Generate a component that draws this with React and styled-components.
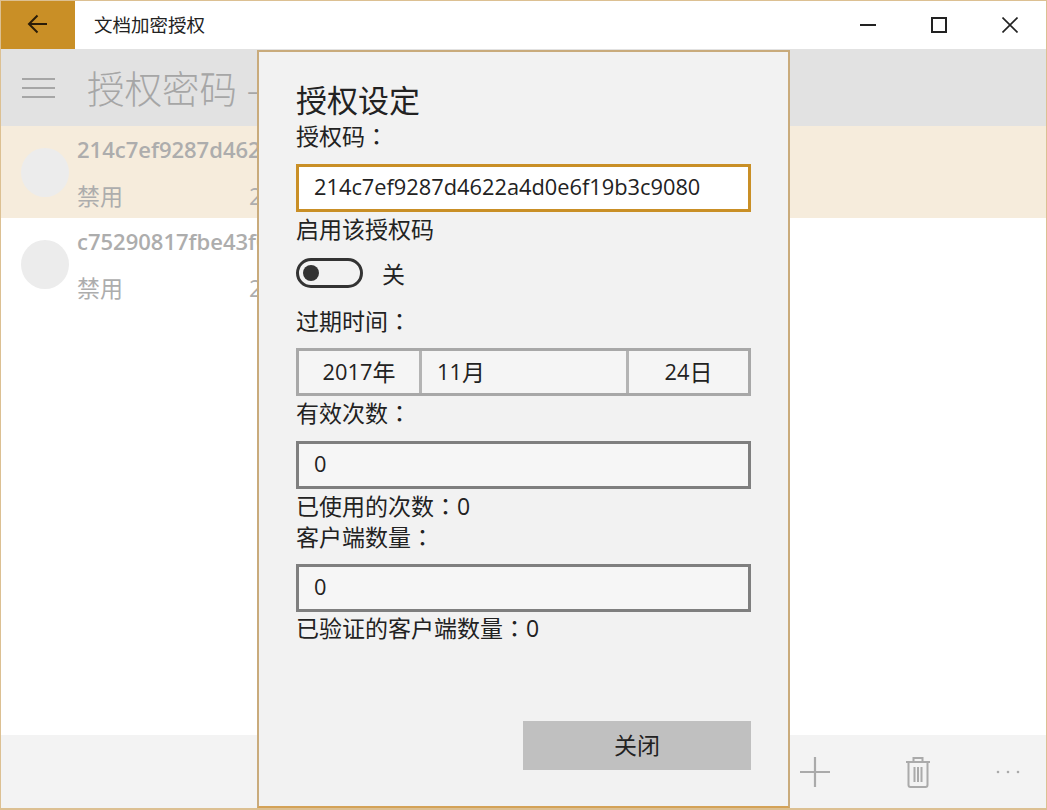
import React from "react";
import styled, { createGlobalStyle } from "styled-components";

const Global = createGlobalStyle`
  html, body { margin: 0; padding: 0; background: #fff; }
  * { box-sizing: border-box; }
`;

const FONT = `"Open Sans", "Noto Sans CJK SC", sans-serif`;

const Frame = styled.div`
  position: relative;
  width: 1047px;
  height: 810px;
  overflow: hidden;
  display: flex;
  flex-direction: column;
  border: 1px solid #dcc092;
  border-bottom-width: 2px;
  font-family: ${FONT};
  background: #fff;
`;

const TitleBar = styled.header`
  height: 48px;
  flex: none;
  display: flex;
  align-items: center;
  background: #fff;
`;

const BackButton = styled.div`
  width: 74px;
  height: 48px;
  background: #c98f26;
  display: flex;
  align-items: center;
  justify-content: center;
  padding-bottom: 2px;
`;

const AppTitle = styled.div`
  margin-left: 19px;
  font-size: 18.5px;
  line-height: 48px;
  color: #222;
`;

const WindowControls = styled.div`
  margin-left: auto;
  display: flex;
  align-items: center;
  padding-right: 28px;
  gap: 55px;
`;

const PageHeader = styled.div`
  height: 77px;
  flex: none;
  background: #e2e2e2;
  display: flex;
  align-items: center;
  padding-left: 21px;
`;

const PageTitle = styled.div`
  margin-left: 32px;
  font-size: 37.5px;
  line-height: 77px;
  padding-top: 1px;
  font-weight: 300;
  color: #a6a6a6;
  white-space: nowrap;
`;

const List = styled.div`
  flex: 1;
  min-height: 0;
  background: #fff;
`;

const Row = styled.div`
  height: 92px;
  display: flex;
  align-items: center;
  padding-left: 20px;
  background: ${(p) => (p.$selected ? "#f6ecdc" : "#fff")};
`;

const Avatar = styled.div`
  width: 48px;
  height: 49px;
  flex: none;
  border-radius: 50%;
  background: #ececec;
`;

const RowText = styled.div`
  margin-left: 8px;
  color: #adadad;
  margin-top: 0;
`;

const RowCode = styled.div`
  font-size: 22px;
  font-weight: 600;
  line-height: 40px;
  white-space: nowrap;
`;

const RowMeta = styled.div`
  display: flex;
  font-size: 23px;
  line-height: 40px;
  margin-top: 7px;
`;

const RowDate = styled.span`
  margin-left: 126px;
  white-space: nowrap;
`;

const CommandBar = styled.div`
  height: 73px;
  flex: none;
  background: #f3f3f3;
  display: flex;
  align-items: center;
  justify-content: flex-end;
  padding-right: 26px;
`;

const CommandSlot = styled.div`
  display: flex;
  align-items: center;
  margin-left: ${(p) => p.$gap}px;
`;

const Dialog = styled.section`
  position: absolute;
  top: 49px;
  left: 256px;
  bottom: 0;
  width: 533px;
  display: flex;
  flex-direction: column;
  padding: 31px 37px 36px 37px;
  background: #f2f2f2;
  border: 2px solid #c9ab7c;
  border-bottom-color: #d4a257;
  color: #222;
`;

const DialogTitle = styled.h2`
  margin: 0;
  font-size: 31px;
  font-weight: 400;
  line-height: 34px;
`;

const Label = styled.div`
  font-size: 23px;
  line-height: 30px;
  margin-top: ${(p) => p.$top ?? 0}px;
  white-space: nowrap;
`;

const Colon = styled.span`
  font-family: "Noto Sans CJK TC", sans-serif;
  line-height: 0;
`;

const Field = styled.div`
  height: 48px;
  margin-top: ${(p) => p.$top ?? 13}px;
  padding: 0 0 3px 15px;
  display: flex;
  align-items: center;
  font-size: 21.8px;
  border: 3px solid ${(p) => (p.$focused ? "#c98f26" : "#7f7f7f")};
  background: ${(p) => (p.$focused ? "#fff" : "#f6f6f6")};
  color: #222;
`;

const ToggleRow = styled.div`
  display: flex;
  align-items: center;
  height: 30px;
  margin-top: 14px;
  gap: 19px;
  font-size: 23px;
`;

const ToggleTrack = styled.div`
  width: 67px;
  height: 30px;
  border: 3px solid #333;
  border-radius: 15px;
  display: flex;
  align-items: center;
  padding-left: 4px;
`;

const ToggleKnob = styled.div`
  width: 16px;
  height: 16px;
  border-radius: 50%;
  background: #333;
`;

const DateBox = styled.div`
  height: 48px;
  margin-top: 12px;
  display: grid;
  grid-template-columns: 120px 1fr 122px;
  border: 3px solid #a8a8a8;
  background: #f5f5f5;
`;

const DatePart = styled.div`
  display: flex;
  align-items: center;
  justify-content: ${(p) => (p.$left ? "flex-start" : "center")};
  padding-left: ${(p) => (p.$left ? 15 : 0)}px;
  padding-bottom: 2px;
  font-size: 21.8px;
  border-left: ${(p) => (p.$divider ? "3px solid #b4b4b4" : "none")};
`;

const Unit = styled.span`
  font-size: 23px;
`;

const CloseButton = styled.div`
  margin-top: auto;
  align-self: flex-end;
  width: 228px;
  height: 49px;
  padding-bottom: 3px;
  display: flex;
  align-items: center;
  justify-content: center;
  background: #c0c0c0;
  font-size: 23px;
  color: #222;
`;

const Hamburger = () => (
  <svg width="33" height="22" viewBox="0 0 33 22" fill="none" stroke="#a6a6a6" strokeWidth="2">
    <path d="M0 2h33M0 11h33M0 20h33" />
  </svg>
);

const BackArrow = () => (
  <svg width="22" height="20" viewBox="0 0 22 20" fill="none" stroke="#2a1c08" strokeWidth="2">
    <path d="M20 10H2M10.5 1.5 2 10l8.5 8.5" />
  </svg>
);

const Minimize = () => (
  <svg width="16" height="16" viewBox="0 0 16 16" stroke="#222" strokeWidth="2" fill="none">
    <path d="M0 8h16" />
  </svg>
);

const Maximize = () => (
  <svg width="16" height="16" viewBox="0 0 16 16" stroke="#222" strokeWidth="2" fill="none">
    <rect x="1" y="1" width="14" height="14" />
  </svg>
);

const CloseX = () => (
  <svg width="16" height="16" viewBox="0 0 16 16" stroke="#222" strokeWidth="1.6" fill="none">
    <path d="M.5.5l15 15M15.5.5l-15 15" />
  </svg>
);

const PlusIcon = () => (
  <svg width="32" height="32" viewBox="0 0 32 32" stroke="#aaa" strokeWidth="2.2" fill="none">
    <path d="M16 1v30M1 16h30" />
  </svg>
);

const TrashIcon = () => (
  <svg width="26" height="32" viewBox="0 0 26 32" stroke="#aaa" strokeWidth="2" fill="none">
    <path d="M1 6h24M8.5 6V2h9v4M3.5 6v23a2 2 0 0 0 2 2h15a2 2 0 0 0 2-2V6M9.5 11v15M13 11v15M16.5 11v15" />
  </svg>
);

const DotsIcon = () => (
  <svg width="24" height="4" viewBox="0 0 24 4" fill="#aaa">
    <circle cx="2" cy="2" r="1.3" />
    <circle cx="12" cy="2" r="1.3" />
    <circle cx="22" cy="2" r="1.3" />
  </svg>
);

const rows = [
  { code: "214c7ef9287d4622a4d0e6f19b3c9080", selected: true },
  { code: "c75290817fbe43f0", selected: false },
];

export default function App() {
  return (
    <>
      <Global />
      <Frame>
        <TitleBar>
          <BackButton><BackArrow /></BackButton>
          <AppTitle>文档加密授权</AppTitle>
          <WindowControls>
            <Minimize />
            <Maximize />
            <CloseX />
          </WindowControls>
        </TitleBar>
        <PageHeader>
          <Hamburger />
          <PageTitle>授权密码 -</PageTitle>
        </PageHeader>
        <List>
          {rows.map((r) => (
            <Row key={r.code} $selected={r.selected}>
              <Avatar />
              <RowText>
                <RowCode>{r.code}</RowCode>
                <RowMeta>
                  <span>禁用</span>
                  <RowDate>2017年11月24日</RowDate>
                </RowMeta>
              </RowText>
            </Row>
          ))}
        </List>
        <CommandBar>
          <CommandSlot><PlusIcon /></CommandSlot>
          <CommandSlot $gap={74}><TrashIcon /></CommandSlot>
          <CommandSlot $gap={65}><DotsIcon /></CommandSlot>
        </CommandBar>
        <Dialog>
          <DialogTitle>授权设定</DialogTitle>
          <Label $top={4}>授权码<Colon>：</Colon></Label>
          <Field $focused>214c7ef9287d4622a4d0e6f19b3c9080</Field>
          <Label $top={2}>启用该授权码</Label>
          <ToggleRow>
            <ToggleTrack><ToggleKnob /></ToggleTrack>
            <span>关</span>
          </ToggleRow>
          <Label $top={18}>过期时间<Colon>：</Colon></Label>
          <DateBox>
            <DatePart>2017<Unit>年</Unit></DatePart>
            <DatePart $left $divider>11<Unit>月</Unit></DatePart>
            <DatePart $divider>24<Unit>日</Unit></DatePart>
          </DateBox>
          <Label $top={2}>有效次数<Colon>：</Colon></Label>
          <Field>0</Field>
          <Label $top={2}>已使用的次数<Colon>：</Colon>0</Label>
          <Label $top={1}>客户端数量<Colon>：</Colon></Label>
          <Field $top={12}>0</Field>
          <Label $top={1}>已验证的客户端数量<Colon>：</Colon>0</Label>
          <CloseButton>关闭</CloseButton>
        </Dialog>
      </Frame>
    </>
  );
}
